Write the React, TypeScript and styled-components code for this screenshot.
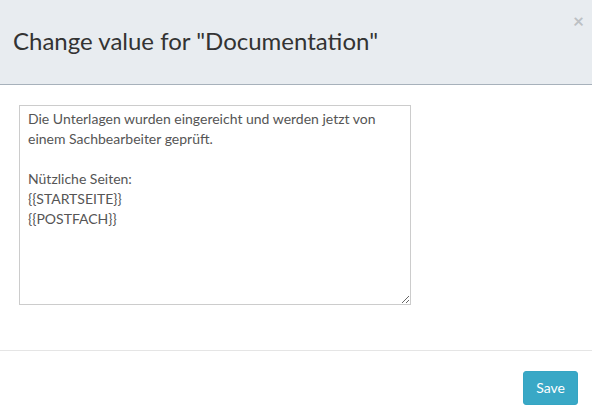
import React from "react";
import styled, { createGlobalStyle } from "styled-components";

const GlobalStyle = createGlobalStyle`
  html, body { margin: 0; padding: 0; background: #ffffff; }
  body { font-family: Lato, "Open Sans", sans-serif; color: #333; }
  * { box-sizing: border-box; }
`;

const Modal = styled.div`
  width: 592px;
  height: 418px;
  display: flex;
  flex-direction: column;
  background: #fff;
`;

const Header = styled.div`
  position: relative;
  height: 85px;
  padding: 0 15px 2px 13px;
  display: flex;
  align-items: center;
  background: #e8ecf0;
  border-bottom: 1px solid #a7b1bb;
`;

const Title = styled.h4`
  margin: 0;
  font-size: 24px;
  font-weight: 400;
  line-height: 30px;
  color: #333;
`;

const Close = styled.button`
  position: absolute;
  top: 10px;
  right: 8px;
  border: 0;
  background: transparent;
  padding: 0;
  font-family: Lato, sans-serif;
  font-size: 19px;
  line-height: 21px;
  font-weight: 700;
  color: #bcc0c4;
  cursor: pointer;
`;

const Body = styled.div`
  padding: 20px 19px 45px;
`;

const TextArea = styled.textarea`
  display: block;
  width: 392px;
  height: 200px;
  margin: 0;
  padding: 3px 8px;
  border: 1px solid #cccccc;
  border-radius: 0;
  font-family: Lato, sans-serif;
  font-size: 14px;
  line-height: 20px;
  color: #555;
  resize: both;
  outline: none;
`;

const Footer = styled.div`
  display: flex;
  justify-content: flex-end;
  padding: 20px 14px 13px;
  border-top: 1px solid #e5e5e5;
`;

const Button = styled.button`
  height: 34px;
  padding: 0 12px;
  border: 1px solid #36a5c3;
  border-radius: 3px;
  background: #39a8c6;
  color: #fff;
  font-family: Lato, sans-serif;
  font-size: 14px;
  line-height: 20px;
  cursor: pointer;
`;

const text = `Die Unterlagen wurden eingereicht und werden jetzt von einem Sachbearbeiter geprüft.

Nützliche Seiten:
{{STARTSEITE}}
{{POSTFACH}}`;

export default function App() {
  return (
    <>
      <GlobalStyle />
      <Modal>
        <Header>
          <Title>Change value for "Documentation"</Title>
          <Close aria-label="Close">×</Close>
        </Header>
        <Body>
          <TextArea defaultValue={text} />
        </Body>
        <Footer>
          <Button>Save</Button>
        </Footer>
      </Modal>
    </>
  );
}
